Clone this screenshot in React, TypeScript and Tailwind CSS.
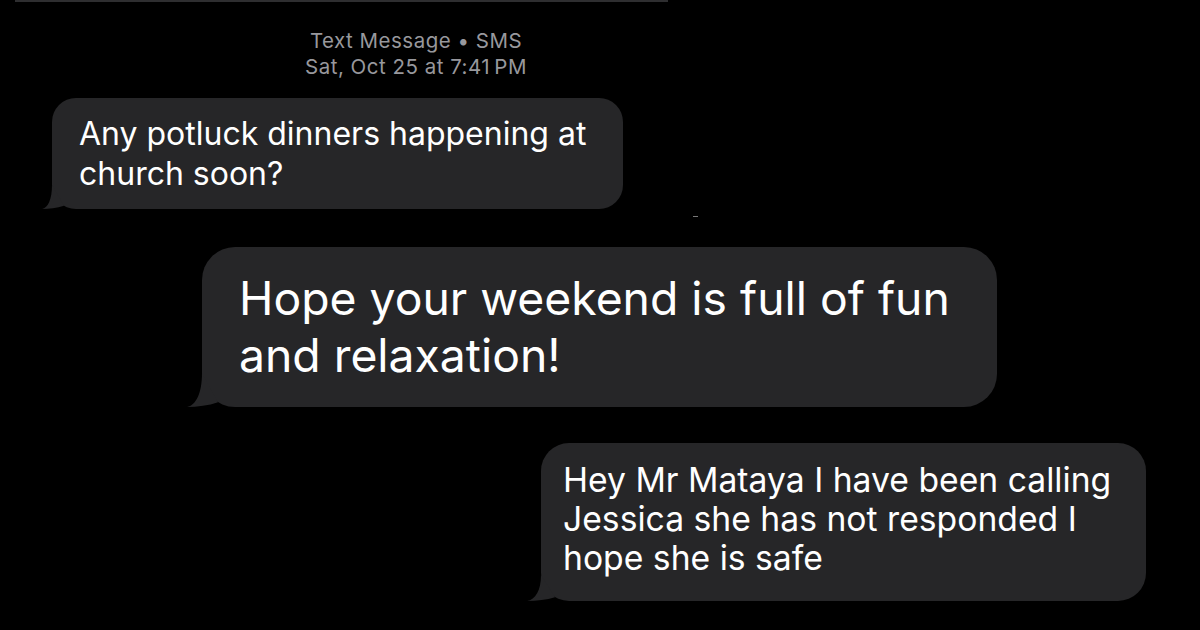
import React from "react";

function Tail({ O, H, R, jx }: { O: number; H: number; R: number; jx: number }) {
  const jy = R - Math.sqrt(R * R - (R - jx) * (R - jx));
  const w = O + jx + 1;
  const d = `M ${O} 0 C ${O} ${H * 0.6}, ${O * 0.6} ${H * 0.95}, 0 ${H} C ${O * 0.7} ${H}, ${O + jx * 0.4} ${H - jy * 0.3}, ${O + jx} ${H - jy} L ${O} 0 Z`;
  return (
    <svg
      className="absolute bottom-0"
      style={{ left: -O, width: w, height: H }}
      viewBox={`0 0 ${w} ${H}`}
    >
      <path d={d} fill="#262628" />
    </svg>
  );
}

export default function App() {
  return (
    <div
      className="relative flex flex-col items-start w-[1200px] h-[630px] bg-black overflow-hidden text-white"
      style={{ fontFamily: "Inter, 'Noto Sans', sans-serif" }}
    >
      <div className="ml-[15px] w-[653px] h-[2px] bg-[#2e2e30]" />

      <div className="flex flex-col items-center ml-[266px] w-[300px] mt-[26px] text-[20.5px] leading-[26px] tracking-[0.5px] text-[#98989d]">
        <div>Text Message • SMS</div>
        <div>Sat, Oct 25 at 7:41&#8201;PM</div>
      </div>

      <div className="relative flex flex-col ml-[52px] mt-[18px] w-[571px] h-[111px] rounded-[24px] bg-[#262628] pl-[27px] pt-[16px] text-[32px] leading-[40px]">
        <Tail O={10} H={24} R={24} jx={12} />
        <div className="relative whitespace-nowrap">Any potluck dinners happening at</div>
        <div className="relative whitespace-nowrap">church soon?</div>
      </div>

      <div className="absolute left-[693px] top-[216px] w-[5px] h-[1px] bg-[#777]" />

      <div className="relative flex flex-col ml-[202px] mt-[38px] w-[795px] h-[160px] rounded-[33px] bg-[#262628] pl-[37px] pt-[23px] text-[46.3px] leading-[57px]">
        <Tail O={15} H={34} R={33} jx={16} />
        <div className="relative whitespace-nowrap">Hope your weekend is full of fun</div>
        <div className="relative whitespace-nowrap">and relaxation!</div>
      </div>

      <div className="relative flex flex-col ml-[541px] mt-[36px] w-[605px] h-[158px] rounded-[28px] bg-[#262628] pl-[22px] pt-[17px] text-[33.7px] leading-[39px]">
        <Tail O={14} H={26} R={28} jx={14} />
        <div className="relative whitespace-nowrap">Hey Mr Mataya I have been calling</div>
        <div className="relative whitespace-nowrap">Jessica she has not responded I</div>
        <div className="relative whitespace-nowrap">hope she is safe</div>
      </div>
    </div>
  );
}
